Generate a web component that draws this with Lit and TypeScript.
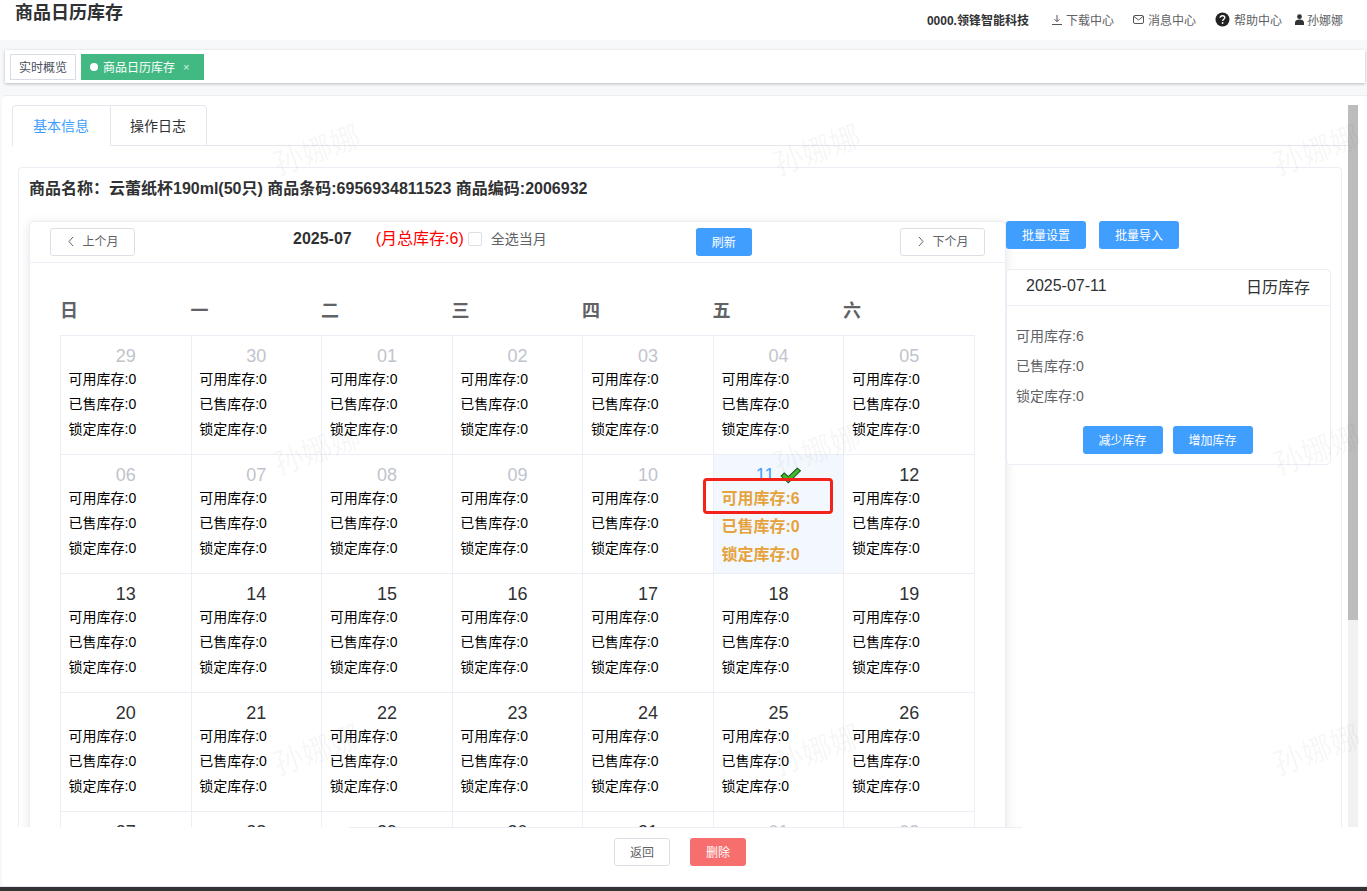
import { LitElement, html, css, svg } from "lit";
import { customElement } from "lit/decorators.js";
import { classMap } from "lit/directives/class-map.js";

type Day = { n: string; muted?: boolean; sel?: boolean };

const rows: [string, boolean][][] = [
  [["29", true], ["30", true], ["01", true], ["02", true], ["03", true], ["04", true], ["05", true]],
  [["06", true], ["07", true], ["08", true], ["09", true], ["10", true], ["11", false], ["12", false]],
  [["13", false], ["14", false], ["15", false], ["16", false], ["17", false], ["18", false], ["19", false]],
  [["20", false], ["21", false], ["22", false], ["23", false], ["24", false], ["25", false], ["26", false]],
  [["27", false], ["28", false], ["29", false], ["30", false], ["31", false], ["01", true], ["02", true]],
];
const days: Day[] = rows.flat().map(([n, muted]) => ({ n, muted, sel: n === "11" }));
const weeks = ["日", "一", "二", "三", "四", "五", "六"];

const chevL = svg`<path d="M5 1 1 5.5 5 10" fill="none" stroke="#606266" stroke-width="1"/>`;
const chevR = svg`<path d="M1 1 5 5.5 1 10" fill="none" stroke="#606266" stroke-width="1"/>`;

@customElement("app-root")
export class AppRoot extends LitElement {
  static styles = css`
    :host {
      display: flex;
      flex-direction: column;
      position: relative;
      width: 100%;
      height: 891px;
      overflow: hidden;
      background: #f7f8fa;
      color: #303133;
      font-family: "Liberation Sans", "Noto Sans CJK SC", sans-serif;
    }
    * { box-sizing: border-box; }
    .top {
      flex: none;
      height: 40px;
      background: #fff;
      display: flex;
      align-items: flex-start;
      padding: 0 24px 0 15px;
    }
    .title { font-size: 18px; font-weight: 700; line-height: 26px; color: #303133; }
    .nav { margin-left: auto; display: flex; align-items: center; height: 39px; font-size: 12px; color: #606266; }
    .org { font-weight: 700; color: #303133; margin-right: 23px; }
    .nav-item { display: flex; align-items: center; gap: 4px; margin-right: 19px; }
    .nav-item.help { margin-right: 13px; }
    .nav-item.user { margin-right: 0; gap: 3px; }
    .nav-item svg { display: block; flex: none; }

    .tagbar {
      flex: none;
      height: 33px;
      margin: 10px 2px 0 5px;
      background: #fff;
      box-shadow: 0 1px 3px rgba(0, 0, 0, 0.25);
      display: flex;
      align-items: center;
      gap: 5px;
      padding-left: 5px;
      font-size: 12px;
    }
    .tag { height: 26px; display: flex; align-items: center; }
    .tag.plain { border: 1px solid #d8dce5; padding: 0 8px 0 8px; color: #495060; }
    .tag.on { background: #42b983; color: #fff; width: 123px; padding-left: 9px; }
    .dot { width: 8px; height: 8px; border-radius: 50%; background: #fff; margin-right: 5px; }
    .x { margin-left: 8px; font-size: 11px; opacity: 0.8; }

    .main {
      flex: 1;
      min-height: 0;
      margin: 12px 0 0 2px;
      background: #fff;
      border-top: 1px solid #ebeef5;
      border-radius: 4px 0 4px 4px;
      display: flex;
      flex-direction: column;
    }
    .scroller {
      flex: none;
      height: 731px;
      padding: 9px 9px 0 10px;
      display: flex;
      overflow: hidden;
    }
    .content { flex: 1; min-width: 0; }
    .track { flex: none; width: 10px; background: #f1f1f1; }
    .thumb { height: 515px; background: #bcbcbc; }

    .tabs { display: flex; height: 41px; border-bottom: 1px solid #e4e7ed; font-size: 14px; }
    .tab {
      width: 98px;
      height: 41px;
      padding: 0 1px 2px 0;
      display: flex;
      align-items: center;
      justify-content: center;
      border: 1px solid #e4e7ed;
      color: #303133;
    }
    .tab.active { color: #409eff; border-right: 0; border-bottom: 0; border-radius: 4px 0 0 0; background: #fff; }
    .tab.second { width: 97px; border-radius: 0 4px 0 0; border-bottom: 0; height: 40px; padding-bottom: 1px; }

    .card {
      margin: 21px 6px 0 6px;
      border: 1px solid #ebeef5;
      border-radius: 4px;
      padding: 10px;
    }
    .goods { font-size: 16px; font-weight: 700; line-height: 21px; color: #303133; margin-bottom: 22px; }
    .row { display: flex; align-items: flex-start; }

    .cal {
      flex: none;
      width: 977px;
      background: #fff;
      border: 1px solid #ebeef5;
      border-radius: 4px;
      box-shadow: 0 2px 12px rgba(0, 0, 0, 0.1);
    }
    .cal-head {
      height: 41px;
      padding: 6px 20px 0;
      border-bottom: 1px solid #ebeef5;
      display: flex;
      align-items: flex-start;
    }
    .month-btn {
      flex: none;
      width: 85px;
      height: 28px;
      padding: 0 0 3px 2px;
      background: #fff;
      border: 1px solid #dcdfe6;
      border-radius: 3px;
      display: flex;
      align-items: center;
      justify-content: center;
      gap: 8px;
      font-size: 12px;
      color: #606266;
    }
    .month-btn svg { margin-top: 2px; }
    .month-btn.next { margin-left: auto; }
    .month { margin-left: 158px; font-size: 16px; font-weight: 700; line-height: 21px; color: #303133; }
    .total { margin-left: 24px; font-size: 16px; line-height: 21px; color: #f00; }
    .box {
      flex: none;
      width: 14px;
      height: 14px;
      margin: 4px 8.500px 0 4.500px;
      border: 1px solid #dcdfe6;
      border-radius: 2px;
      background: #fff;
    }
    .all { font-size: 14px; line-height: 22px; color: #606266; }
    .btn {
      flex: none;
      height: 28px;
      padding-bottom: 2px;
      border-radius: 3px;
      display: flex;
      align-items: center;
      justify-content: center;
      font-size: 12px;
      background: #409eff;
      color: #fff;
    }
    .refresh { width: 56px; margin-left: 149px; }
    .w80 { width: 80px; }

    .cal-body { padding: 37px 30px 0; }
    .weeks {
      display: grid;
      grid-template-columns: repeat(7, 130.5px);
      height: 20px;
      margin-bottom: 15px;
      font-size: 18px;
      font-weight: 700;
      line-height: 22px;
      color: #606266;
    }
    .grid {
      display: grid;
      grid-template-columns: repeat(7, 1fr);
      border-left: 1px solid #ebeef5;
      border-top: 1px solid #ebeef5;
    }
    .cell {
      position: relative;
      height: 119px;
      padding-top: 10px;
      border-right: 1px solid #ebeef5;
      border-bottom: 1px solid #ebeef5;
      color: #000;
      font-size: 14px;
      line-height: 25px;
    }
    .num {
      display: flex;
      align-items: center;
      justify-content: center;
      gap: 6px;
      height: 20px;
      margin-bottom: 1px;
      font-size: 18px;
      line-height: 20px;
      color: #303133;
    }
    .line { padding-left: 7.600px; white-space: nowrap; }
    .muted .num { color: #c0c4cc; }
    .sel { background: #f2f8fe; }
    .sel .num { color: #409eff; margin-bottom: 0; }
    .sel .line { font-size: 16px; font-weight: 700; line-height: 28px; color: #e6a23c; }
    .mark {
      position: absolute;
      left: -11px;
      top: 23px;
      width: 130px;
      height: 36px;
      border: 3px solid #f5221b;
      border-radius: 4px;
    }

    .side { flex: none; width: 325px; }
    .side-btns { display: flex; gap: 13px; }
    .stock { margin-top: 20px; border: 1px solid #ebeef5; border-radius: 4px; background: #fff; padding-bottom: 10px; }
    .stock-head {
      height: 36px;
      padding: 0 20px 3px 19px;
      border-bottom: 1px solid #ebeef5;
      display: flex;
      align-items: center;
      justify-content: space-between;
      font-size: 16px;
      color: #303133;
    }
    .stock-body { padding: 15px 0 0 9px; font-size: 14px; line-height: 30px; color: #606266; }
    .stock-btns { display: flex; justify-content: center; gap: 10px; margin-top: 15px; padding-right: 2px; }

    .foot { flex: 1; min-height: 0; }
    .rule { width: 673px; height: 1px; margin-left: 347px; background: #ebeef5; }
    .actions { display: flex; justify-content: center; gap: 20px; padding: 10px 9px 0 0; }
    .back { width: 56px; background: #fff; border: 1px solid #dcdfe6; color: #606266; }
    .del { width: 56px; background: #f76e6e; }
    .bar { flex: none; height: 5px; background: #333; border-top: 1px solid #e4e7ed; }

    .wm {
      position: absolute;
      left: 66px;
      top: -2px;
      display: grid;
      grid-template-columns: repeat(3, 500px);
      grid-auto-rows: 300px;
      pointer-events: none;
    }
    .wm span {
      display: flex;
      align-items: center;
      justify-content: center;
      font-size: 30px;
      color: rgba(0, 0, 0, 0.05);
      transform: rotate(-20deg);
    }
  `;

  private lines(d: Day) {
    const v = d.sel ? ["6", "0", "0"] : ["0", "0", "0"];
    return html`
      <div class="line">可用库存:${v[0]}</div>
      <div class="line">已售库存:${v[1]}</div>
      <div class="line">锁定库存:${v[2]}</div>
    `;
  }

  private cell(d: Day) {
    return html`
      <div class=${classMap({ cell: true, muted: !!d.muted, sel: !!d.sel })}>
        <div class="num">
          <span>${d.n}</span>
          ${d.sel
            ? html`<svg width="21" height="17" viewBox="0 0 20 16"><path d="M1 8.500 4 5.500 8 9 16.500 1 19.500 3.500 8 15Z" fill="#3dbb2c" stroke="#17571a" stroke-width="1"/></svg>`
            : ""}
        </div>
        ${this.lines(d)}
        ${d.sel ? html`<div class="mark"></div>` : ""}
      </div>
    `;
  }

  render() {
    return html`
      <div class="top">
        <div class="title">商品日历库存</div>
        <div class="nav">
          <span class="org">0000.领锋智能科技</span>
          <span class="nav-item">
            <svg width="10" height="10" viewBox="0 0 10 10"><path d="M5 0V6.500M2.500 4.200 5 6.700 7.500 4.200M0 9.500H10" fill="none" stroke="#555" stroke-width="1"/></svg>
            下载中心
          </span>
          <span class="nav-item">
            <svg width="11" height="9" viewBox="0 0 11 9"><rect x=".5" y=".5" width="10" height="8" rx="1.500" fill="none" stroke="#555"/><path d="M1 1.500 5.500 5 10 1.500" fill="none" stroke="#555"/></svg>
            消息中心
          </span>
          <span class="nav-item help">
            <svg width="15" height="15" viewBox="0 0 15 15"><circle cx="7.500" cy="7.500" r="7" fill="#222"/><path d="M5.200 5.800C5.300 4.400 6.300 3.700 7.500 3.700 8.900 3.700 9.800 4.500 9.800 5.600 9.800 7.200 7.600 7.300 7.600 9" fill="none" stroke="#fff" stroke-width="1.400"/><circle cx="7.600" cy="11" r=".9" fill="#fff"/></svg>
            帮助中心
          </span>
          <span class="nav-item user">
            <svg width="9" height="11" viewBox="0 0 9 11"><circle cx="4.500" cy="2.700" r="2.400" fill="#333"/><path d="M0 11V8.500C0 6.500 2 5.500 4.500 5.500S9 6.500 9 8.500V11Z" fill="#333"/></svg>
            孙娜娜
          </span>
        </div>
      </div>

      <div class="tagbar">
        <div class="tag plain">实时概览</div>
        <div class="tag on"><span class="dot"></span>商品日历库存<span class="x">×</span></div>
      </div>

      <div class="main">
        <div class="scroller">
          <div class="content">
            <div class="tabs">
              <div class="tab active">基本信息</div>
              <div class="tab second">操作日志</div>
            </div>
            <div class="card">
              <div class="goods">商品名称：云蕾纸杯190ml(50只) 商品条码:6956934811523 商品编码:2006932</div>
              <div class="row">
                <div class="cal">
                  <div class="cal-head">
                    <div class="month-btn"><svg width="6" height="11" viewBox="0 0 6 11">${chevL}</svg>上个月</div>
                    <div class="month">2025-07</div>
                    <div class="total">(月总库存:6)</div>
                    <div class="box"></div>
                    <div class="all">全选当月</div>
                    <div class="btn refresh">刷新</div>
                    <div class="month-btn next"><svg width="6" height="11" viewBox="0 0 6 11">${chevR}</svg>下个月</div>
                  </div>
                  <div class="cal-body">
                    <div class="weeks">${weeks.map((w) => html`<div>${w}</div>`)}</div>
                    <div class="grid">${days.map((d) => this.cell(d))}</div>
                  </div>
                </div>
                <div class="side">
                  <div class="side-btns">
                    <div class="btn w80">批量设置</div>
                    <div class="btn w80">批量导入</div>
                  </div>
                  <div class="stock">
                    <div class="stock-head"><span>2025-07-11</span><span>日历库存</span></div>
                    <div class="stock-body">
                      <div>可用库存:6</div>
                      <div>已售库存:0</div>
                      <div>锁定库存:0</div>
                    </div>
                    <div class="stock-btns">
                      <div class="btn w80">减少库存</div>
                      <div class="btn w80">增加库存</div>
                    </div>
                  </div>
                </div>
              </div>
            </div>
          </div>
          <div class="track"><div class="thumb"></div></div>
        </div>
        <div class="foot">
          <div class="rule"></div>
          <div class="actions">
            <div class="btn back">返回</div>
            <div class="btn del">删除</div>
          </div>
        </div>
      </div>
      <div class="bar"></div>

      <div class="wm">
        ${Array.from({ length: 9 }, () => html`<span>孙娜娜</span>`)}
      </div>
    `;
  }
}
